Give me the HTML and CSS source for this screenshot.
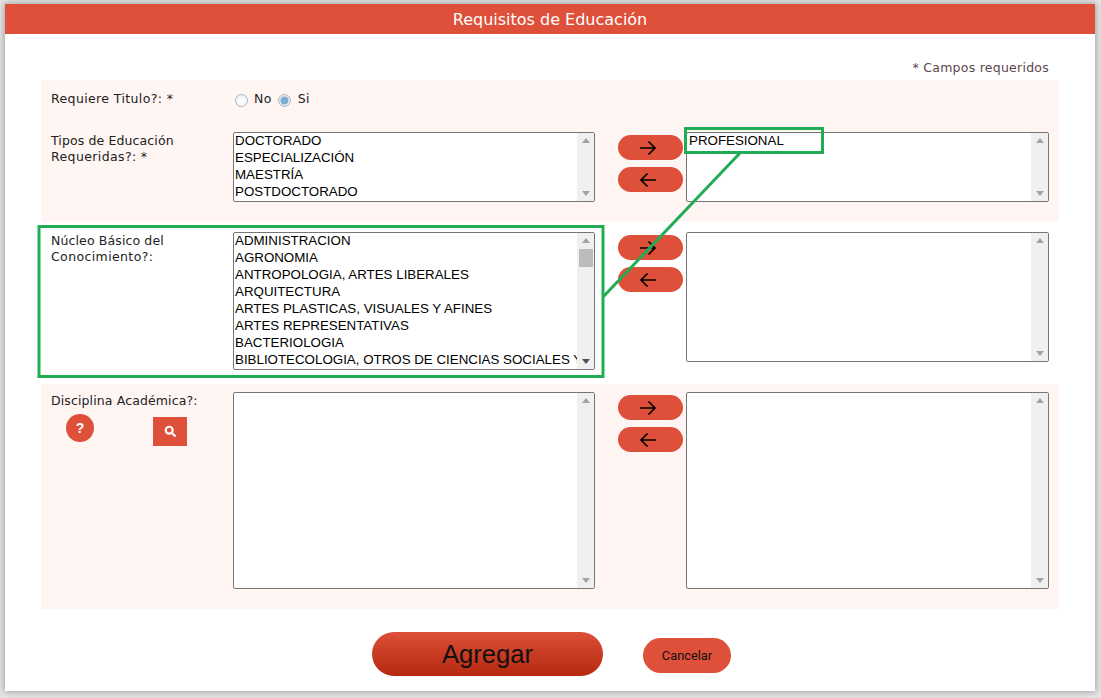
FILE: index.html
```html
<!DOCTYPE html>
<html lang="es">
<head>
<meta charset="utf-8">
<title>Requisitos de Educación</title>
<link rel="stylesheet" href="styles.css">
</head>
<body>
<main class="panel">
  <h1 class="title">Requisitos de Educación</h1>
  <p class="required-note">* Campos requeridos</p>

  <section class="band tinted first">
    <div class="radio-row">
      <span class="label wide">Requiere Titulo?: *</span>
      <div class="radios">
        <span class="radio"></span><span class="radio-text">No</span>
        <span class="radio checked"></span><span class="radio-text">Si</span>
      </div>
    </div>
    <div class="picker short">
      <span class="label">Tipos de Educación<br><span class="wide">Requeridas?: *</span></span>
      <div class="listbox">
        <div class="options"><div>DOCTORADO</div><div>ESPECIALIZACIÓN</div><div>MAESTRÍA</div><div>POSTDOCTORADO</div></div>
        <div class="scrollbar"><span class="up"></span><span class="down"></span></div>
      </div>
      <div class="movers">
        <button class="mover"><svg viewBox="0 0 18 16"><path d="M1 8h15M9.500 1.500 16 8l-6.500 6.500"/></svg></button>
        <button class="mover"><svg viewBox="0 0 18 16"><path d="M17 8H2M8.500 1.500 2 8l6.500 6.500"/></svg></button>
      </div>
      <div class="listbox">
        <div class="options"><div class="pad">PROFESIONAL</div></div>
        <div class="scrollbar"><span class="up"></span><span class="down"></span></div>
      </div>
    </div>
  </section>

  <section class="band middle">
    <div class="picker medium">
      <span class="label">Núcleo Básico del<br><span class="wide">Conocimiento?:</span></span>
      <div class="listbox">
        <div class="options"><div>ADMINISTRACION</div><div>AGRONOMIA</div><div>ANTROPOLOGIA, ARTES LIBERALES</div><div>ARQUITECTURA</div><div>ARTES PLASTICAS, VISUALES Y AFINES</div><div>ARTES REPRESENTATIVAS</div><div>BACTERIOLOGIA</div><div>BIBLIOTECOLOGIA, OTROS DE CIENCIAS SOCIALES Y</div></div>
        <div class="scrollbar"><span class="up"></span><span class="thumb"></span><span class="down dark"></span></div>
      </div>
      <div class="movers">
        <button class="mover"><svg viewBox="0 0 18 16"><path d="M1 8h15M9.500 1.500 16 8l-6.500 6.500"/></svg></button>
        <button class="mover"><svg viewBox="0 0 18 16"><path d="M17 8H2M8.500 1.500 2 8l6.500 6.500"/></svg></button>
      </div>
      <div class="listbox shorter">
        <div class="options"></div>
        <div class="scrollbar"><span class="up"></span><span class="down"></span></div>
      </div>
    </div>
  </section>

  <section class="band tinted last">
    <div class="picker tall">
      <div class="label-stack">
        <span class="label">Disciplina Académica?:</span>
        <div class="tools">
          <span class="help">?</span>
          <button class="search"><svg viewBox="0 0 12 12"><circle cx="4.800" cy="4.800" r="3.200"/><path d="m7.300 7.300 3.400 3.400"/></svg></button>
        </div>
      </div>
      <div class="listbox">
        <div class="options"></div>
        <div class="scrollbar"><span class="up"></span><span class="down"></span></div>
      </div>
      <div class="movers">
        <button class="mover"><svg viewBox="0 0 18 16"><path d="M1 8h15M9.500 1.500 16 8l-6.500 6.500"/></svg></button>
        <button class="mover"><svg viewBox="0 0 18 16"><path d="M17 8H2M8.500 1.500 2 8l6.500 6.500"/></svg></button>
      </div>
      <div class="listbox">
        <div class="options"></div>
        <div class="scrollbar"><span class="up"></span><span class="down"></span></div>
      </div>
    </div>
  </section>

  <footer class="actions">
    <button class="btn-primary">Agregar</button>
    <button class="btn-secondary">Cancelar</button>
  </footer>
</main>

<svg class="annotation" viewBox="0 0 1101 698" width="1101" height="698">
  <rect x="39" y="226.500" width="564" height="150"/>
  <rect x="685.500" y="128.500" width="137" height="24"/>
  <path d="M603 297 740 153"/>
</svg>
</body>
</html>
```
FILE: styles.css
```css
* { box-sizing: border-box; }

html, body {
  margin: 0;
  height: 100%;
  background: #e6e6e6;
  overflow: hidden;
}

body {
  padding: 4px 6px 7px 5px;
  font-family: "DejaVu Sans", sans-serif;
  font-size: 12px;
  color: #222;
}

.panel {
  height: 687px;
  background: #fff;
  box-shadow: 0 0 7px 1px #a0a0a0;
}

.title {
  margin: 0;
  height: 30px;
  padding-top: 1px;
  background: #de5039;
  color: #fff;
  font-family: "DejaVu Sans", sans-serif;
  font-weight: 400;
  font-size: 16px;
  line-height: 29px;
  text-align: center;
}

.required-note {
  margin: 0;
  height: 46px;
  padding: 26px 46px 0 0;
  text-align: right;
  font-size: 12.500px;
  letter-spacing: 0.25px;
  line-height: 15px;
  color: #5d4650;
}

.band {
  margin: 0 36px;
  padding-left: 10px;
}

.tinted { background: #fff5f3; }
.first { height: 142px; padding-top: 10px; }
.middle { height: 162px; padding-top: 10px; }
.last { height: 225px; padding-top: 8px; }

.radio-row {
  display: grid;
  grid-template-columns: 182px 1fr;
  height: 42px;
}

.label {
  font-size: 12.500px;
  letter-spacing: 0.12px;
  line-height: 16px;
  color: #222;
  padding-top: 1px;
}

.wide { letter-spacing: 0.38px; }

.radios {
  display: flex;
  align-items: flex-start;
  padding-top: 1px;
}

.radio {
  width: 13px;
  height: 13px;
  margin: 3px 0 0 2px;
  border-radius: 50%;
  border: 1px solid #aeb6c0;
  background: radial-gradient(circle at 50% 60%, #f8fafb 45%, #dfe4e9 100%);
}

.radio.checked {
  margin-left: 1px;
  background: radial-gradient(circle, #7fadd2 0 3.500px, #e8edf1 4.500px);
}

.radio-text {
  margin: 0 5px 0 6px;
  font-size: 12.500px;
  letter-spacing: 0.38px;
  line-height: 16px;
}

.radio.checked + .radio-text { margin-left: 7px; }

.picker {
  display: grid;
  grid-template-columns: 182px 362px 91px 363px;
}

.short { height: 70px; }
.medium { height: 138px; }
.tall { height: 197px; }

.movers {
  display: flex;
  flex-direction: column;
  gap: 7px;
  margin-left: 23px;
  width: 65px;
  padding-top: 3px;
}

.mover {
  width: 65px;
  height: 25px;
  padding: 0 5px 0 0;
  border: 0;
  border-radius: 13px;
  background: #de5039;
  display: flex;
  align-items: center;
  justify-content: center;
}

.mover svg {
  width: 18px;
  height: 16px;
  fill: none;
  stroke: #000;
  stroke-width: 1.700;
}

.listbox {
  display: flex;
  background: #fff;
  border: 1px solid #767676;
  border-radius: 2px;
  overflow: hidden;
}

.listbox.shorter { height: 130px; }

.options {
  flex: 1;
  min-width: 0;
  margin-top: -1px;
  padding-left: 1px;
  font-family: "Liberation Sans", Arial, sans-serif;
  font-size: 13.330px;
  line-height: 17px;
  color: #000;
  white-space: nowrap;
  overflow: hidden;
}

.options .pad { padding-left: 1px; }

.scrollbar {
  flex: none;
  width: 17px;
  background: #f0f0f0;
  display: flex;
  flex-direction: column;
  align-items: center;
  padding-top: 5px;
}

.up, .down {
  width: 0;
  height: 0;
  border-left: 4px solid transparent;
  border-right: 4px solid transparent;
}

.up { border-bottom: 5px solid #a3a3a3; }

.down {
  border-top: 5px solid #a3a3a3;
  margin-top: auto;
  margin-bottom: 5px;
}

.down.dark { border-top-color: #505050; }

.thumb {
  width: 14px;
  height: 18px;
  margin-top: 6px;
  background: #bcbcbc;
}

.label-stack {
  display: flex;
  flex-direction: column;
}

.tools {
  display: flex;
  align-items: flex-start;
  margin-top: 5px;
  padding-left: 15px;
}

.help {
  width: 28px;
  height: 28px;
  border-radius: 50%;
  background: #de5039;
  color: #fff;
  font-family: "Liberation Sans", Arial, sans-serif;
  font-weight: 700;
  font-size: 14px;
  line-height: 28px;
  text-align: center;
}

.search {
  width: 34px;
  height: 29px;
  margin: 3px 0 0 59px;
  padding: 0;
  border: 0;
  background: #de5039;
  display: flex;
  align-items: center;
  justify-content: center;
}

.search svg {
  width: 13px;
  height: 13px;
  fill: none;
  stroke: #fff;
  stroke-width: 2;
}

.actions {
  display: flex;
  align-items: center;
  padding: 23px 0 0 367px;
}

.btn-primary {
  width: 231px;
  height: 44px;
  padding: 0;
  border: 0;
  border-radius: 22px;
  background: linear-gradient(#dd4f38, #b5290f);
  color: #111;
  font-family: "Liberation Sans", Arial, sans-serif;
  font-size: 25.600px;
}

.btn-secondary {
  width: 88px;
  height: 35px;
  margin: 3px 0 0 40px;
  padding: 0;
  border: 0;
  border-radius: 18px;
  background: #de5039;
  color: #111;
  font-family: Roboto, sans-serif;
  font-size: 12.800px;
}

.annotation {
  position: absolute;
  left: 0;
  top: 0;
  pointer-events: none;
  fill: none;
  stroke: #22ad55;
  stroke-width: 3;
}
```
